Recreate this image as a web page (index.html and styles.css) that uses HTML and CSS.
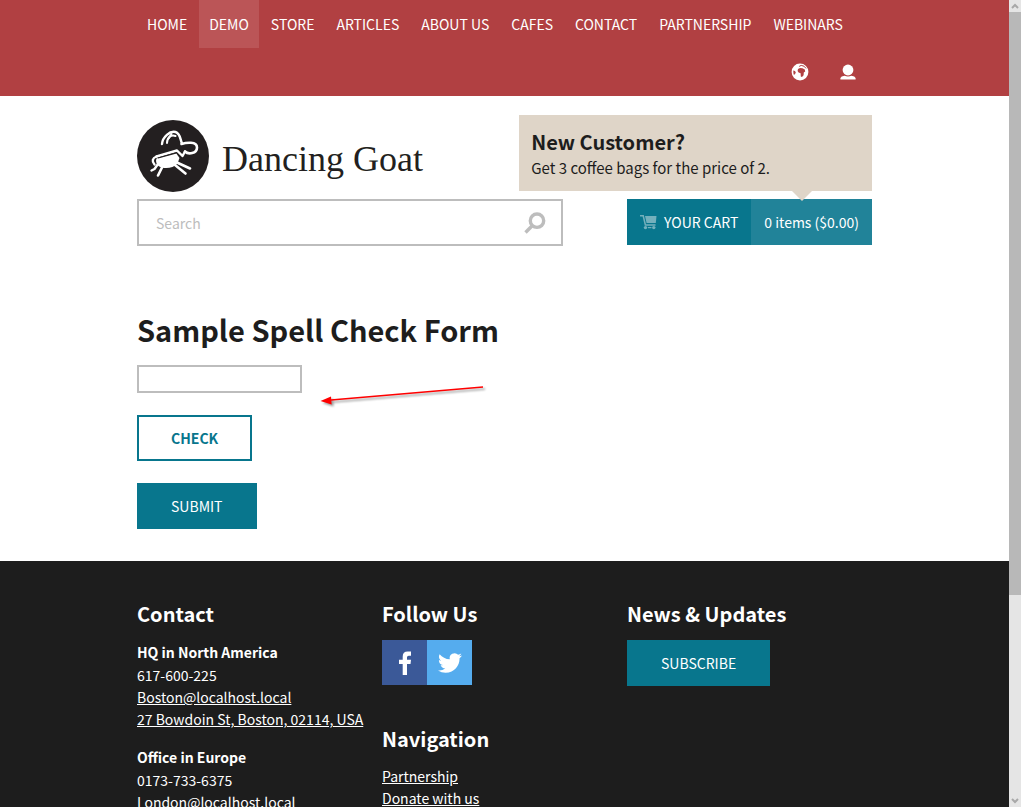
FILE: index.html
```html
<!DOCTYPE html>
<html lang="en">
<head>
    <meta charset="UTF-8">
    <meta name="viewport" content="width=device-width, initial-scale=1.0">
    <title>Dancing Goat</title>
    <link rel="stylesheet" href="styles.css">
</head>
<body>

    <div class="page">
        <div class="navbar">
            <div class="container">
                <nav class="menu">
                    <a href="#">HOME</a>
                    <a href="#" class="active">DEMO</a>
                    <a href="#">STORE</a>
                    <a href="#">ARTICLES</a>
                    <a href="#">ABOUT US</a>
                    <a href="#">CAFES</a>
                    <a href="#">CONTACT</a>
                    <a href="#">PARTNERSHIP</a>
                    <a href="#">WEBINARS</a>
                </nav>
                <div class="tools">
                    <a href="#" aria-label="Language">
                        <svg width="18" height="18" viewBox="0 0 18 18">
                            <circle cx="9" cy="9" r="8.4" fill="#fff"/>
                            <path d="M7 6 L9 5 L11.5 5.2 L13.8 6.6 L14.2 8.4 L12.8 9.6 L12.6 12.2 L11 14 L9.8 13.4 L9.6 10.2 L7.6 9.6 L6.6 8 Z" fill="#b14042"/>
                            <path d="M2.2 7.4 L4 8 L4.8 9.6 L3.8 11.6 L2.6 11.4 Z" fill="#b14042"/>
                            <path d="M8.2 3.4 L10.2 2.4 L13 3.2 L15 5.4" fill="none" stroke="#b14042" stroke-width="1"/>
                        </svg>
                    </a>
                    <a href="#" aria-label="Account">
                        <svg width="16" height="16" viewBox="0 0 16 16" fill="#fff">
                            <circle cx="8" cy="6" r="5.4"/>
                            <path d="M.4 15.6 V14 Q1 12.4 4.6 11.8 Q8 13.4 11.4 11.8 Q15 12.4 15.6 14 V15.6 Z"/>
                        </svg>
                    </a>
                </div>
            </div>
        </div>

        <header class="container header">
            <div class="header-row">
                <a href="#" class="logo">
                    <svg width="72" height="72" viewBox="0 0 72 72">
                        <circle cx="36" cy="36" r="36" fill="#231f20"/>
                        <g fill="none" stroke="#fff" stroke-linecap="round" stroke-linejoin="round">
                            <path d="M25 24 C25.5 17 33 10.5 38.5 12 C43.5 13.5 43 19 45 23.5" stroke-width="2.4"/>
                            <path d="M30 23 C30 18 34 14 38.5 16" stroke-width="2"/>
                            <path d="M34.5 14 L31 19" stroke-width="2"/>
                            <path d="M44.5 24 C49 22.5 60 21 60 27.5 C60 34 51 34.5 48 31.5" stroke-width="2.6"/>
                            <path d="M48 31.5 L45.5 36 L40 30.5 L19.5 36.5" stroke-width="2.4"/>
                            <path d="M19.5 36.5 C15.5 38 14.5 41 17.5 44.5" stroke-width="2.4"/>
                            <path d="M21 44 L17.5 49 L14.5 50.5" stroke-width="2.4"/>
                            <path d="M25.5 46.5 L21 55.5" stroke-width="2.6"/>
                            <path d="M41 43 L53 48.5" stroke-width="2.6"/>
                            <path d="M38 45 L48.5 53.5" stroke-width="2.6"/>
                        </g>
                        <path d="M19.5 38.5 L39 33 L42.5 38 L40.5 43.5 C36 48.5 27 49.5 21.5 46 C19 43.5 18.5 41 19.5 38.5 Z" fill="#fff"/>
                        <path d="M21 38 L39.5 32.8" fill="none" stroke="#231f20" stroke-width="1.2"/>
                    </svg>
                    <span class="logo-text">Dancing Goat</span>
                </a>
                <div class="promo">
                    <h2>New Customer?</h2>
                    <p>Get 3 coffee bags for the price of 2.</p>
                </div>
            </div>
            <div class="header-row">
                <form class="search">
                    <input type="text" id="search" placeholder="Search" aria-label="Search">
                    <button type="button" aria-label="Search">
                        <svg width="22" height="22" viewBox="0 0 22 22" fill="none" stroke="#bdbdbd">
                            <circle cx="13" cy="8.7" r="6.7" stroke-width="3.4"/>
                            <path d="M8.2 13.8 L1.5 20.5" stroke-width="3.4"/>
                        </svg>
                    </button>
                </form>
                <a href="#" class="cart">
                    <span class="cart-label">
                        <svg width="18" height="16" viewBox="0 0 18 16" fill="#74b0bc">
                            <path d="M0 1 H3.8 L6 10.2 H15.5 V11.8 H4.8 L2.6 2.6 H0 Z"/>
                            <path d="M5 2 H16.5 L15.8 9 H6.6 Z"/>
                            <circle cx="5.5" cy="13.6" r="1.7"/>
                            <circle cx="13.8" cy="13.6" r="1.7"/>
                            <path d="M8 13 H11.5 V14.2 H8 Z"/>
                        </svg>
                        YOUR CART
                    </span>
                    <span class="cart-total">0 items ($0.00)</span>
                </a>
            </div>
        </header>

        <main class="container content">
            <h1>Sample Spell Check Form</h1>
            <form class="spell-form">
                <input type="text" id="spell-text" aria-label="Text to check">
                <button type="button" class="btn btn-outline">CHECK</button>
                <button type="button" class="btn">SUBMIT</button>
            </form>
            <svg class="arrow" width="172" height="28" viewBox="0 0 172 28">
                <g fill="#ff0000" stroke="#ff0000">
                    <path d="M12 16 L164 3" fill="none" stroke-width="1.6"/>
                    <path d="M1.5 17 L12 12.4 L12.6 20.4 Z" stroke="none"/>
                </g>
            </svg>
        </main>

        <footer class="footer">
            <div class="container footer-columns">
                <div>
                    <h2>Contact</h2>
                    <address>
                        <strong>HQ in North America</strong>
                        <span>617-600-225</span>
                        <a href="#">Boston@localhost.local</a>
                        <a href="#">27 Bowdoin St, Boston, 02114, USA</a>
                    </address>
                    <address>
                        <strong>Office in Europe</strong>
                        <span>0173-733-6375</span>
                        <a href="#">London@localhost.local</a>
                    </address>
                </div>
                <div>
                    <h2>Follow Us</h2>
                    <div class="social">
                        <a href="#" class="facebook" aria-label="Facebook">
                            <svg width="24" height="24" viewBox="0 0 24 24" fill="#fff">
                                <path d="M9.7 24 V13 H6 V8.7 H9.7 V5.5 Q9.7 .5 14.7 .5 H18 V4.7 H15.7 Q14 4.7 14 6.3 V8.7 H18 L17.5 13 H14 V24 Z"/>
                            </svg>
                        </a>
                        <a href="#" class="twitter" aria-label="Twitter">
                            <svg width="24" height="24" viewBox="0 0 24 24" fill="#fff">
                                <path d="M23.95 4.57a10 10 0 0 1-2.82.77 4.96 4.96 0 0 0 2.16-2.72c-.95.55-2 .95-3.13 1.18a4.92 4.92 0 0 0-8.38 4.48C7.69 8.09 4.07 6.13 1.64 3.16a4.82 4.82 0 0 0-.67 2.48c0 1.71.87 3.21 2.19 4.1a4.9 4.9 0 0 1-2.23-.62v.06a4.92 4.92 0 0 0 3.95 4.83 5 5 0 0 1-2.21.08 4.94 4.94 0 0 0 4.6 3.42A9.87 9.87 0 0 1 0 19.54a13.99 13.99 0 0 0 7.56 2.21c9.05 0 14-7.5 14-13.99 0-.21 0-.42-.02-.63a9.94 9.94 0 0 0 2.46-2.55z"/>
                            </svg>
                        </a>
                    </div>
                    <h2>Navigation</h2>
                    <nav class="footer-nav">
                        <a href="#">Partnership</a>
                        <a href="#">Donate with us</a>
                    </nav>
                </div>
                <div>
                    <h2>News &amp; Updates</h2>
                    <button type="button" class="btn">SUBSCRIBE</button>
                </div>
            </div>
        </footer>
    </div>

    <div class="scrollbar">
        <svg width="12" height="12" viewBox="0 0 12 12" fill="none" stroke="#a8a8a8" stroke-width="2">
            <path d="M3 8 L6 5 L9 8"/>
        </svg>
        <div class="thumb"></div>
        <svg width="12" height="12" viewBox="0 0 12 12" fill="none" stroke="#a8a8a8" stroke-width="2">
            <path d="M3 4 L6 7 L9 4"/>
        </svg>
    </div>

</body>
</html>
```
FILE: styles.css
```css
* {
    box-sizing: border-box;
}
body {
    margin: 0;
    height: 100vh;
    display: flex;
    overflow: hidden;
    background-color: #fff;
    color: #1d1d1d;
    font-family: "Noto Sans CJK SC", "Open Sans", sans-serif;
    font-size: 14px;
    line-height: 22px;
}
h1, h2, p {
    margin: 0;
}
h1 {
    font-size: 29px;
    line-height: 40px;
}
h2 {
    font-size: 20px;
    line-height: 28px;
}
a {
    color: inherit;
}
svg {
    display: block;
}
input, button {
    font-family: inherit;
    font-size: inherit;
    line-height: inherit;
    color: inherit;
    border-radius: 0;
}
.page {
    flex: 1;
    overflow: hidden;
}
.container {
    max-width: 735px;
    margin: 0 auto;
}

/* top bar */
.navbar {
    background-color: #b14042;
    color: #fff;
}
.navbar a {
    text-decoration: none;
}
.menu {
    display: flex;
    gap: 2px;
}
.menu a {
    padding: 0 10px;
    line-height: 48px;
    white-space: nowrap;
}
.menu a.active {
    background-color: #bb5557;
}
.tools {
    display: flex;
    justify-content: flex-end;
}
.tools a {
    width: 48px;
    height: 48px;
    display: flex;
    align-items: center;
    justify-content: center;
}

/* header */
.header {
    display: flex;
    flex-direction: column;
    gap: 8px;
    padding-top: 19px;
}
.header-row {
    display: flex;
    align-items: flex-start;
    justify-content: space-between;
}
.logo {
    display: flex;
    align-items: center;
    gap: 13px;
    padding-top: 5px;
    height: 76px;
    text-decoration: none;
    color: #231f20;
}
.logo svg {
    flex-shrink: 0;
}
.logo-text {
    padding-top: 6px;
    font-family: "Liberation Serif", serif;
    font-size: 36px;
    line-height: 40px;
}
.promo {
    position: relative;
    width: 48%;
    height: 76px;
    padding: 13px 12px;
    background-color: #dfd5c8;
}
.promo::after {
    content: "";
    position: absolute;
    right: 60px;
    top: 100%;
    border: 10px solid transparent;
    border-top-color: #dfd5c8;
    border-bottom: 0;
}
.promo p {
    line-height: 24px;
    font-size: 15px;
}
.search {
    display: flex;
    width: 58%;
    height: 47px;
    border: 2px solid #bdbdbd;
}
.search input {
    flex: 1;
    min-width: 0;
    border: 0;
    padding: 0 17px;
    background: none;
}
.search input::placeholder {
    color: #bdbdbd;
}
.search button {
    border: 0;
    padding: 0 15px;
    background: none;
}
.cart {
    display: flex;
    line-height: 46px;
    background-color: #08768d;
    color: #fff;
    text-decoration: none;
}
.cart-label {
    display: flex;
    align-items: center;
    gap: 6px;
    padding: 0 13px;
}
.cart-total {
    padding: 0 13px;
    background-color: #218399;
}

/* form */
.content {
    position: relative;
    padding: 63px 0 32px;
}
.spell-form {
    display: flex;
    flex-direction: column;
    align-items: flex-start;
    gap: 22px;
    padding-top: 16px;
}
.spell-form input {
    width: 165px;
    height: 28px;
    border: 2px solid #bdbdbd;
}
.btn {
    height: 46px;
    padding: 0 34px;
    border: 0;
    background-color: #08768d;
    color: #fff;
    cursor: pointer;
}
.btn-outline {
    padding: 0 32px;
    border: 2px solid #08768d;
    background-color: #fff;
    color: #08768d;
    font-weight: bold;
}
.arrow {
    position: absolute;
    left: 182px;
    top: 138px;
    filter: drop-shadow(2px 2px 1px rgba(0, 0, 0, 0.4));
}

/* footer */
.footer {
    background-color: #1d1d1d;
    color: #fff;
    min-height: 400px;
    padding: 39px 0;
}
.footer-columns {
    display: grid;
    grid-template-columns: repeat(3, 1fr);
}
.footer h2 {
    margin-bottom: 12px;
}
address {
    display: flex;
    flex-direction: column;
    align-items: flex-start;
    margin-bottom: 15px;
    font-style: normal;
    white-space: nowrap;
}
address strong {
    line-height: 24px;
}
.social {
    display: flex;
    margin-bottom: 40px;
}
.social a {
    width: 45px;
    height: 45px;
    display: flex;
    align-items: center;
    justify-content: center;
}
.facebook {
    background-color: #3b5998;
}
.twitter {
    background-color: #55acee;
}
.footer-nav {
    display: flex;
    flex-direction: column;
    align-items: flex-start;
}

/* scrollbar */
.scrollbar {
    width: 12px;
    display: grid;
    grid-template-rows: 12px 1fr 12px;
    background-color: #e5e5e5;
}
.thumb {
    height: 74.5%;
    background-color: #b8b8b8;
}
```
